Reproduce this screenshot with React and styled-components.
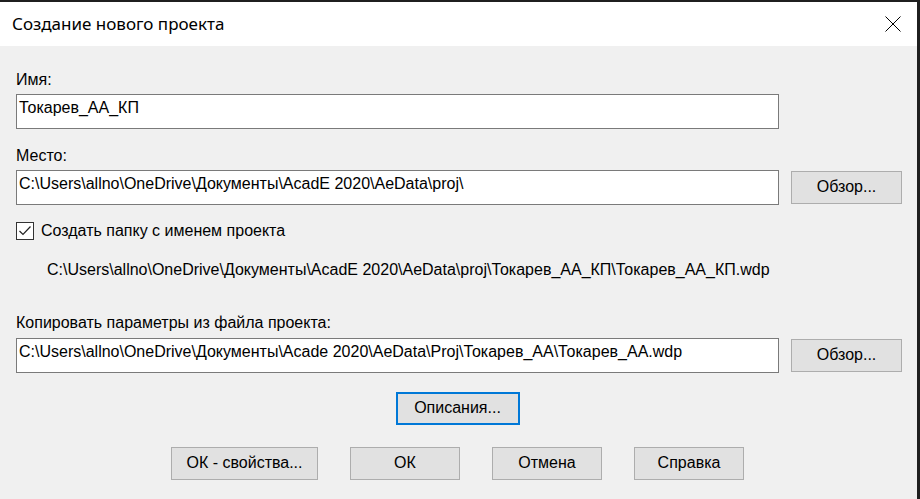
import styled, { createGlobalStyle } from 'styled-components';

const GlobalStyle = createGlobalStyle`
  html, body {
    margin: 0;
    padding: 0;
    background: #1f1f1f;
    overflow: hidden;
  }
  #root {
    height: 100vh;
  }
`;

const Screen = styled.div`
  height: 499px;
  width: 920px;
  padding-top: 2px;
  box-sizing: border-box;
  background: #1f1f1f;
`;

const Window = styled.div`
  width: 917px;
  height: 497px;
  background: #f0f0f0;
  display: flex;
  flex-direction: column;
  font-family: "Liberation Sans", Arial, sans-serif;
  font-size: 16px;
  color: #000;
`;

const TitleBar = styled.div`
  height: 44px;
  background: #fff;
  display: flex;
  align-items: center;
  justify-content: space-between;
  padding: 0 16px 0 12px;
`;

const Title = styled.div`
  font-family: "Noto Sans", "Open Sans", sans-serif;
  font-size: 17px;
  color: #000;
  padding-bottom: 2px;
`;

const CloseButton = styled.div`
  width: 16px;
  height: 16px;
  display: flex;
  margin-top: -1px;
`;

const Body = styled.div`
  display: flex;
  flex-direction: column;
  padding: 25px 0 0 16px;
`;

const Label = styled.div`
  line-height: 18px;
  margin-top: ${(p) => p.$top || 0}px;
  margin-bottom: ${(p) => p.$bottom || 5}px;
`;

const Row = styled.div`
  display: flex;
  align-items: center;
  gap: 12px;
`;

const Field = styled.div`
  box-sizing: border-box;
  width: 763px;
  height: 35px;
  border: 1px solid #7a7a7a;
  background: #fff;
  padding: 4px 2px 0;
  line-height: 18px;
  white-space: nowrap;
  overflow: hidden;
`;

const Button = styled.div`
  box-sizing: border-box;
  width: ${(p) => p.$w || 110}px;
  height: ${(p) => p.$h || 33}px;
  background: #e1e1e1;
  border: ${(p) => (p.$focused ? '2px solid #0078d7' : '1px solid #adadad')};
  display: flex;
  align-items: center;
  justify-content: center;
  line-height: 18px;
  padding-bottom: 1px;
`;

const CheckRow = styled.label`
  display: flex;
  align-items: center;
  gap: 7px;
  margin-top: 17px;
  line-height: 18px;
`;

const CheckBox = styled.span`
  box-sizing: border-box;
  width: 18px;
  height: 18px;
  border: 1px solid #333;
  background: #fff;
  display: flex;
  align-items: center;
  justify-content: center;
`;

const PathNote = styled.div`
  padding-left: 31px;
  margin-top: 21px;
  line-height: 18px;
`;

const CenterRow = styled.div`
  display: flex;
  justify-content: center;
  gap: ${(p) => p.$gap || 0}px;
  margin-top: ${(p) => p.$top || 0}px;
  margin-left: -18px;
`;

function App() {
  return (
    <>
      <GlobalStyle />
      <Screen>
        <Window>
          <TitleBar>
            <Title>Создание нового проекта</Title>
            <CloseButton>
              <svg width="16" height="16" viewBox="0 0 16 16">
                <path d="M0.5 0.5 L15.5 15.5 M15.5 0.5 L0.5 15.5" stroke="#000" strokeWidth="1" fill="none" />
              </svg>
            </CloseButton>
          </TitleBar>
          <Body>
            <Label>Имя:</Label>
            <Field>Токарев_АА_КП</Field>

            <Label $top={18}>Место:</Label>
            <Row>
              <Field>C:\Users\allno\OneDrive\Документы\AcadE 2020\AeData\proj\</Field>
              <Button $w={111}>Обзор...</Button>
            </Row>

            <CheckRow>
              <CheckBox>
                <svg width="14" height="12" viewBox="0 0 14 12">
                  <path d="M1.5 6 L5 9.5 L12.5 1.5" stroke="#222" strokeWidth="1.2" fill="none" />
                </svg>
              </CheckBox>
              Создать папку с именем проекта
            </CheckRow>

            <PathNote>
              C:\Users\allno\OneDrive\Документы\AcadE 2020\AeData\proj\Токарев_АА_КП\Токарев_АА_КП.wdp
            </PathNote>

            <Label $top={35} $bottom={6}>Копировать параметры из файла проекта:</Label>
            <Row>
              <Field>C:\Users\allno\OneDrive\Документы\Acade 2020\AeData\Proj\Токарев_АА\Токарев_АА.wdp</Field>
              <Button $w={111}>Обзор...</Button>
            </Row>

            <CenterRow $top={19}>
              <Button $w={124} $h={33} $focused>Описания...</Button>
            </CenterRow>

            <CenterRow $top={22} $gap={32}>
              <Button $w={147}>ОК - свойства...</Button>
              <Button>ОК</Button>
              <Button>Отмена</Button>
              <Button>Справка</Button>
            </CenterRow>
          </Body>
        </Window>
      </Screen>
    </>
  );
}

export default App;
